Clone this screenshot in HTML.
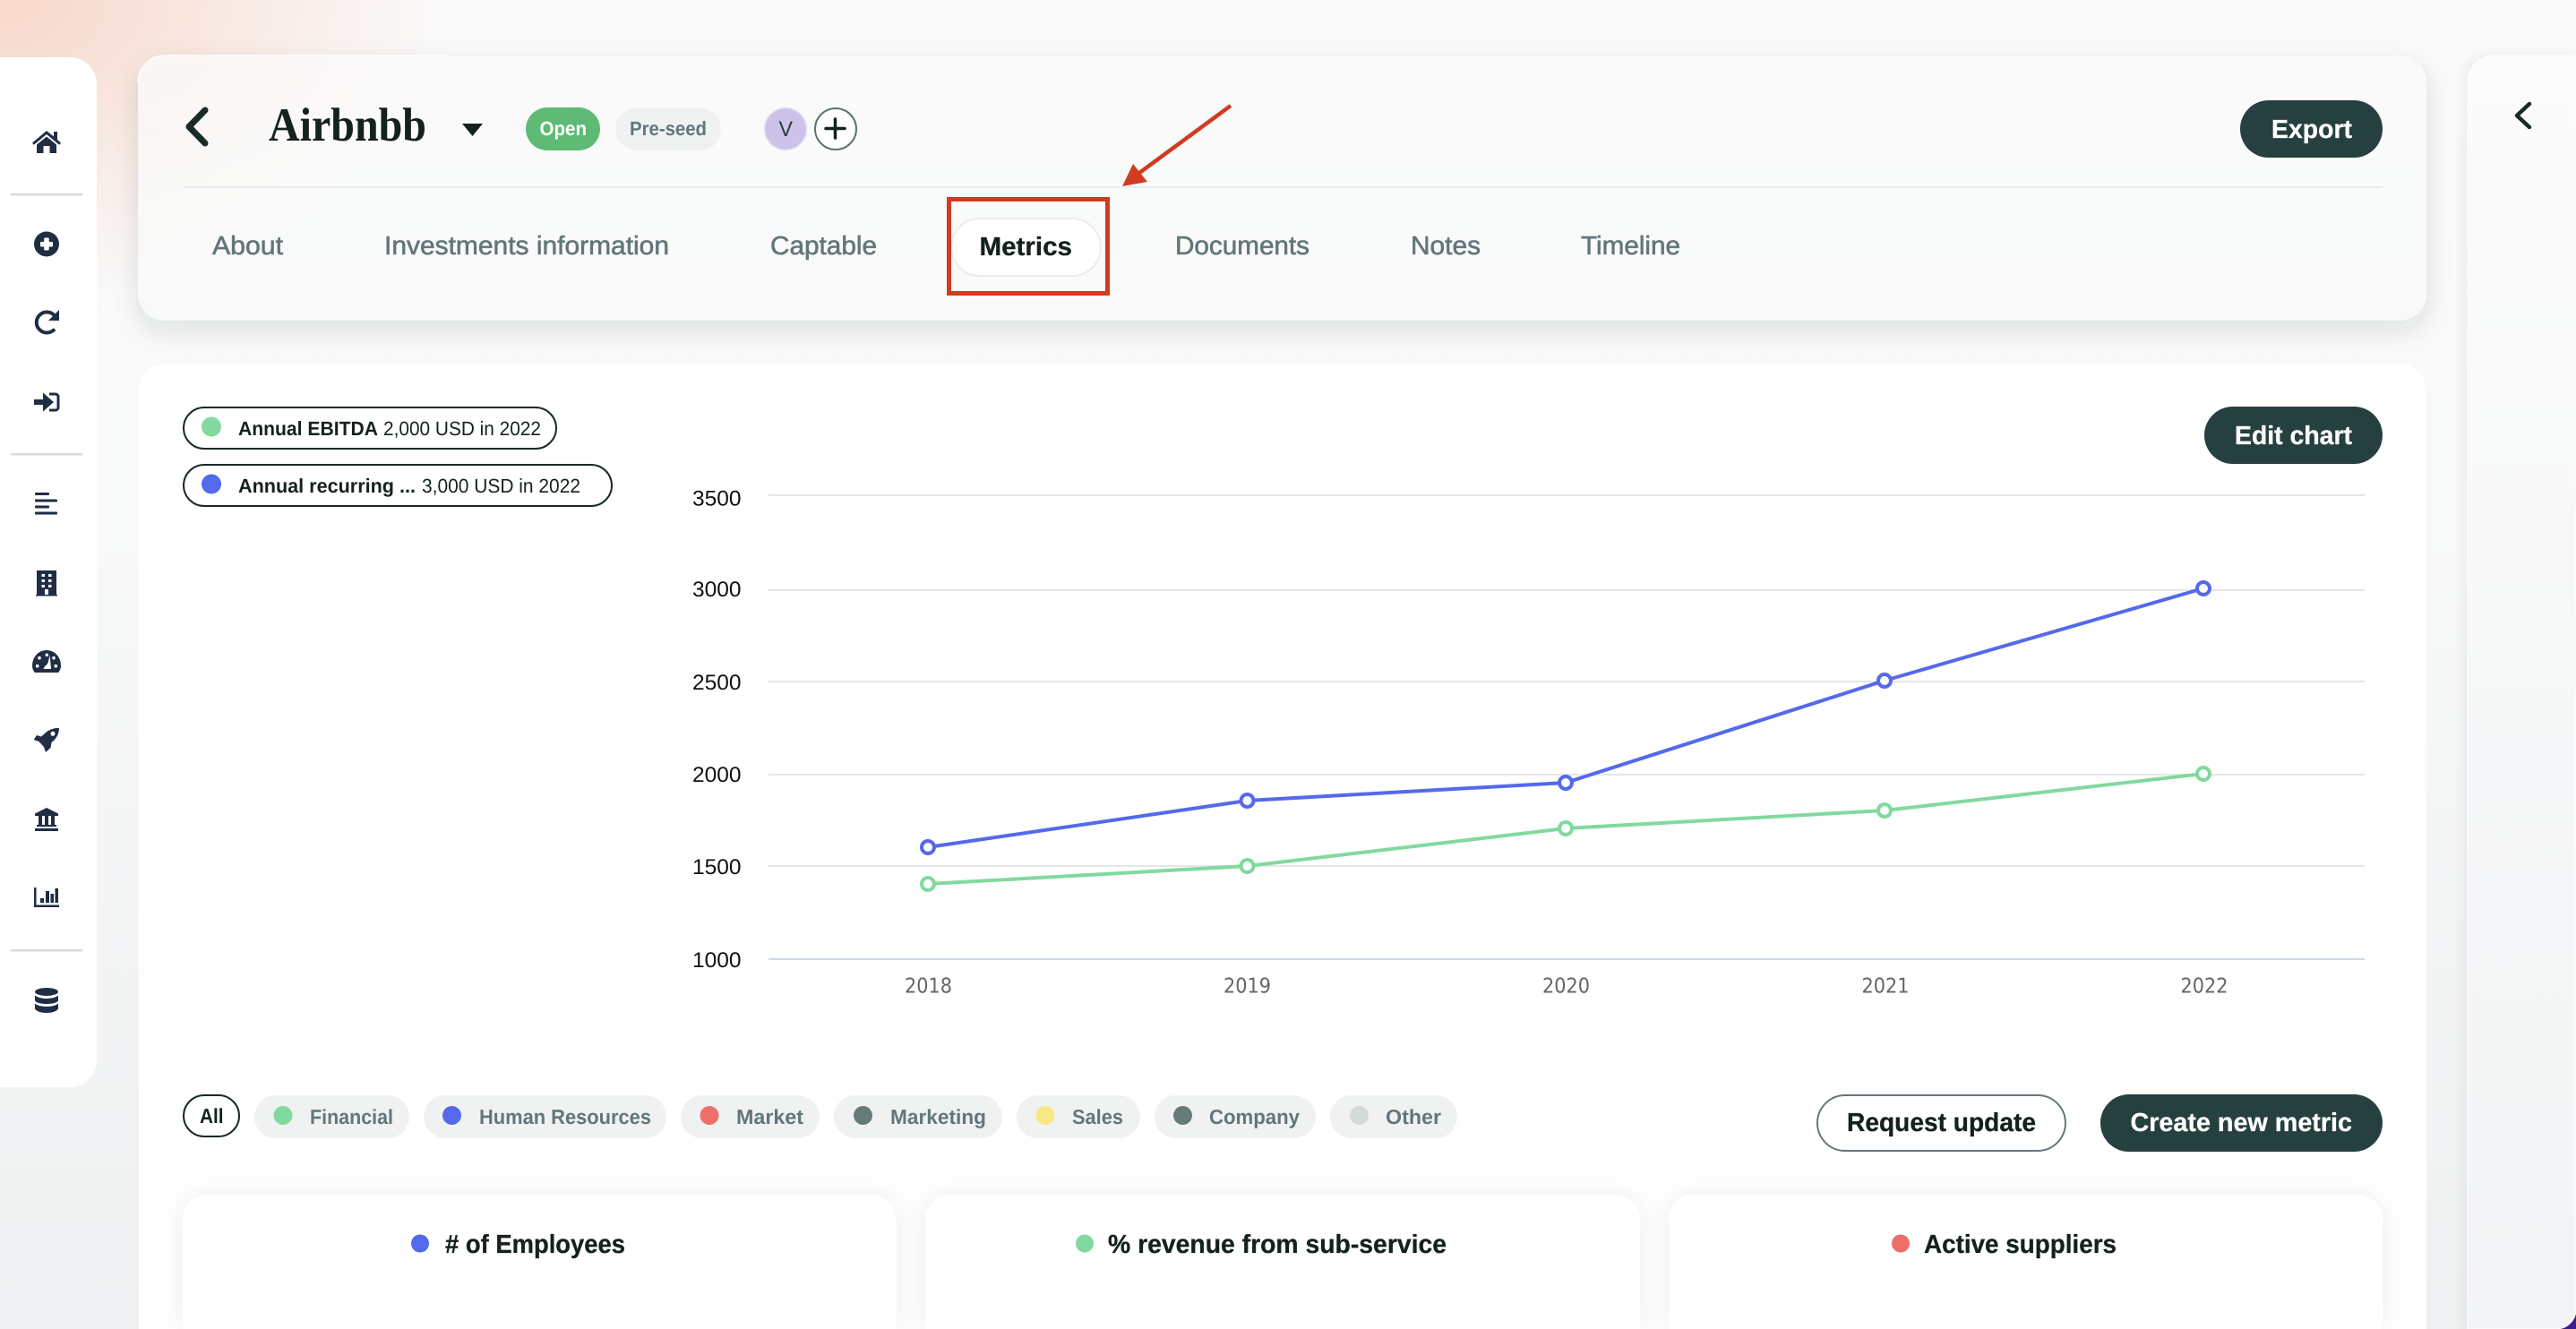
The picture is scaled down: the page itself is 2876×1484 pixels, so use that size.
<!DOCTYPE html>
<html><head><meta charset="utf-8"><title>Airbnbb metrics</title>
<style>
html,body{margin:0;padding:0;width:2876px;height:1484px;overflow:hidden;background:#fafafa}
svg{display:block}
text{font-family:"Liberation Sans",sans-serif;text-rendering:geometricPrecision}
.b{font-weight:700}
.tab{font-size:29px;fill:#63767a;stroke:#63767a;stroke-width:.6}
.f{font-size:23px;font-weight:700;fill:#63767a}
.t{font-size:29px;font-weight:700;fill:#14211f;stroke:#14211f;stroke-width:.3}
.y{font-size:24px;fill:#111}
.x{font-size:23px;fill:#666;font-family:"DejaVu Sans",sans-serif}
.w{fill:#fff;font-weight:700;font-size:29px;stroke:#fff;stroke-width:.3}
</style></head><body>
<svg width="2876" height="1484" viewBox="0 0 2876 1484" xmlns="http://www.w3.org/2000/svg">
<defs>
<linearGradient id="bg" x1="0" y1="0" x2="0" y2="1"><stop offset="0" stop-color="#fafafa"/><stop offset=".4" stop-color="#f8f9f9"/><stop offset="1" stop-color="#eef0f1"/></linearGradient>
<radialGradient id="peach" gradientUnits="userSpaceOnUse" cx="0" cy="0" r="1" gradientTransform="scale(500 340)"><stop offset="0" stop-color="#f8d8ca"/><stop offset=".35" stop-color="#f8e0d6" stop-opacity=".85"/><stop offset="1" stop-color="#f8e0d6" stop-opacity="0"/></radialGradient>
<linearGradient id="rp" x1="0" y1="0" x2="0" y2="1"><stop offset="0" stop-color="#fbfbfb"/><stop offset="1" stop-color="#f2f4f5"/></linearGradient>
<linearGradient id="hc" x1="0" y1="0" x2="0" y2="1"><stop offset="0" stop-color="#fafafa"/><stop offset=".55" stop-color="#f9fbfa"/><stop offset="1" stop-color="#f9f9f9"/></linearGradient>
<filter id="s1" x="-5%" y="-15%" width="110%" height="140%"><feDropShadow dx="0" dy="10" stdDeviation="14" flood-color="#1a2a28" flood-opacity=".12"/></filter>
<filter id="s2" x="-15%" y="-15%" width="130%" height="130%"><feDropShadow dx="0" dy="0" stdDeviation="16" flood-color="#1a2a38" flood-opacity=".07"/></filter>
<filter id="s3" x="-10%" y="-5%" width="120%" height="110%"><feDropShadow dx="-4" dy="0" stdDeviation="8" flood-color="#1a2a38" flood-opacity=".06"/></filter>
</defs>
<rect width="2876" height="1484" fill="url(#bg)"/>
<rect width="700" height="500" fill="url(#peach)"/>

<!-- corner purple -->
<rect x="2850" y="1460" width="26" height="24" fill="#3a1d8f"/>
<!-- right panel -->
<path d="M2755 1484V92a30 30 0 0 1 30-30H2876V1462a22 22 0 0 1-22 22Z" fill="url(#rp)" stroke="#fff" stroke-width="1" filter="url(#s3)"/>
<path d="M2824 116 2810 129 2824 142" fill="none" stroke="#1a2a28" stroke-width="4.500" stroke-linecap="round" stroke-linejoin="round"/>

<!-- sidebar -->
<path d="M0 64H78a30 30 0 0 1 30 30V1184a30 30 0 0 1-30 30H0Z" fill="#fff"/>
<rect x="12" y="216" width="80" height="2.500" fill="#d5dbd9"/>
<rect x="12" y="506" width="80" height="2.500" fill="#d5dbd9"/>
<rect x="12" y="1060" width="80" height="2.500" fill="#d5dbd9"/>
<g fill="#1f2d45">
<!-- home -->
<path d="M52 146 60 152.500V147h4v9l4 3.500-1.800 2.200L52 150 37.800 161.700 36 159.500Z"/>
<path d="M41 171v-9.500L52 152.500l11 9V171h-7.500v-8h-7v8Z"/>
<!-- plus circle -->
<circle cx="52" cy="272.500" r="14"/>
<rect x="45" y="270" width="14" height="5.500" rx="1" fill="#fff"/><rect x="49.200" y="265.500" width="5.500" height="14" rx="1" fill="#fff"/>
<!-- redo -->
<path d="M61 352.500A11.500 11.500 0 1 0 61 367.500" fill="none" stroke="#1f2d45" stroke-width="4"/>
<path d="M66 346V358H54Z"/>
<!-- sign in -->
<path d="M38 446h10v-7.500L60 449 48 459.500V452H38Z"/>
<path d="M55 440h7a3 3 0 0 1 3 3v12a3 3 0 0 1-3 3h-7" fill="none" stroke="#1f2d45" stroke-width="3"/>
<!-- bars -->
<rect x="39" y="550" width="16" height="3" rx="1"/><rect x="39" y="557.500" width="25" height="3" rx="1"/><rect x="39" y="564.500" width="16" height="3" rx="1"/><rect x="39" y="571.500" width="25" height="3" rx="1"/>
<!-- building -->
<path d="M41 637h22v27h1v1.500H40V664h1Z"/>
<g fill="#fff"><rect x="46.500" y="641" width="3.500" height="3"/><rect x="54" y="641" width="3.500" height="3"/><rect x="46.500" y="647" width="3.500" height="3"/><rect x="54" y="647" width="3.500" height="3"/><rect x="46.500" y="653" width="3.500" height="3"/><rect x="54" y="653" width="3.500" height="3"/><rect x="50" y="658" width="4" height="6"/></g>
<!-- gauge -->
<path d="M39 751Q36 748 36 743A16 17 0 0 1 68 743Q68 748 65 751Z"/>
<g fill="#fff"><circle cx="41.700" cy="743.700" r="1.800"/><circle cx="44" cy="734.700" r="1.800"/><circle cx="52.300" cy="731.300" r="1.800"/><circle cx="60" cy="734.700" r="1.800"/><circle cx="62.300" cy="743.700" r="1.800"/><path d="M55.700 732 57 747H48.300L50.500 743.500 53 741.500Z"/></g>
<!-- rocket -->
<path d="M66 812.700C59 813 54 815 50 819L46 822.500 41 821 37.700 826 43.500 828 49 834 51 840 56.500 835 57.500 829C62 826 66 820 66 812.700Z"/>
<circle cx="59" cy="819.300" r="2.500" fill="#fff"/>
<!-- bank -->
<path d="M52 902 65 908.500V911H39V908.500Z"/>
<rect x="43" y="911" width="4" height="10"/><rect x="50" y="911" width="4" height="10"/><rect x="57" y="911" width="4" height="10"/>
<rect x="41" y="921" width="22" height="2"/><rect x="39" y="925" width="26" height="3"/>
<!-- chart -->
<path d="M38 991h2.500v19.500H66V1013H38Z"/>
<rect x="45" y="1003" width="4" height="5"/><rect x="51" y="995" width="4" height="13"/><rect x="56.500" y="998" width="3.500" height="10"/><rect x="61.500" y="992" width="3.500" height="16"/>
<!-- database -->
<ellipse cx="52" cy="1107.500" rx="13" ry="4.500"/>
<path d="M39 1111.500c3 2.500 8 3.500 13 3.500s10-1 13-3.500v6c-2 2.500-7 3.500-13 3.500s-11-1-13-3.500Z"/>
<path d="M39 1120.500c3 2.500 8 3.500 13 3.500s10-1 13-3.500v6c-2 3-7 4.500-13 4.500s-11-1.500-13-4.500Z"/>
</g>

<!-- header card -->
<rect x="154" y="62" width="2555" height="296" rx="30" fill="url(#hc)" filter="url(#s1)"/>
<rect x="154" y="62" width="700" height="296" rx="30" fill="url(#peach)" opacity=".22"/>
<path d="M154 92a30 30 0 0 1 30-30H500" fill="none" stroke="#fff" stroke-width="1.500"/>
<rect x="204" y="208" width="2456" height="2" fill="#eceeee"/>
<path d="M229 123 211 141.500 229 160" fill="none" stroke="#1a2a28" stroke-width="7" stroke-linecap="round" stroke-linejoin="round"/>
<text x="300" y="157" font-size="53" font-weight="700" fill="#14211f" textLength="176" lengthAdjust="spacingAndGlyphs" style="font-family:'Liberation Serif',serif">Airbnbb</text>
<path d="M516 138H539L527.500 152Z" fill="#14211f"/>
<rect x="587" y="120" width="83" height="48" rx="24" fill="#5fba76"/>
<text x="602.500" y="151" font-size="22" class="b" fill="#fff" textLength="52.500" lengthAdjust="spacingAndGlyphs">Open</text>
<rect x="687" y="120" width="118" height="48" rx="24" fill="#f0f2f2"/>
<text x="703" y="151" font-size="22" class="b" fill="#63767a" textLength="86" lengthAdjust="spacingAndGlyphs">Pre-seed</text>
<circle cx="877" cy="144" r="23.500" fill="#cdc3ea" stroke="#e6e2f2" stroke-width="1.500"/>
<text x="869.500" y="152" font-size="24" fill="#2c3b3b" textLength="15.500" lengthAdjust="spacingAndGlyphs">V</text>
<circle cx="933" cy="144" r="23" fill="#fff" stroke="#5f7370" stroke-width="2"/>
<path d="M922 143.500H943M932.500 133V154" stroke="#14211f" stroke-width="3.500" stroke-linecap="round"/>

<rect x="2501" y="112" width="159" height="64" rx="32" fill="#263f3f"/>
<text class="w" x="2536" y="154" textLength="90" lengthAdjust="spacingAndGlyphs">Export</text>

<!-- tabs -->
<text class="tab" x="237" y="284" textLength="79" lengthAdjust="spacingAndGlyphs">About</text>
<text class="tab" x="429" y="284" textLength="318" lengthAdjust="spacingAndGlyphs">Investments information</text>
<text class="tab" x="860" y="284" textLength="119" lengthAdjust="spacingAndGlyphs">Captable</text>
<rect x="1062" y="244" width="167" height="64" rx="32" fill="#fff" stroke="#eceeee" stroke-width="2"/>
<text class="t" x="1093.500" y="285" textLength="103.500" lengthAdjust="spacingAndGlyphs">Metrics</text>
<text class="tab" x="1312" y="284" textLength="150" lengthAdjust="spacingAndGlyphs">Documents</text>
<text class="tab" x="1575" y="284" textLength="78" lengthAdjust="spacingAndGlyphs">Notes</text>
<text class="tab" x="1765" y="284" textLength="111" lengthAdjust="spacingAndGlyphs">Timeline</text>
<rect x="1059.500" y="222.500" width="177" height="105" fill="none" stroke="#d13b20" stroke-width="5"/>
<path d="M1374 118 1268 196" stroke="#d13b20" stroke-width="4.500" fill="none"/>
<path d="M1253 208 1265 183 1281 203Z" fill="#d13b20"/>

<!-- chart card -->
<path d="M155 1484V436a30 30 0 0 1 30-30H2679a30 30 0 0 1 30 30V1484Z" fill="#fff"/>
<rect x="205" y="455" width="416" height="46" rx="23" fill="#fff" stroke="#1a2a28" stroke-width="2"/>
<circle cx="236" cy="476.500" r="11" fill="#82d99e"/>
<text x="266" y="486" font-size="22" class="b" fill="#14211f" textLength="156" lengthAdjust="spacingAndGlyphs">Annual EBITDA</text>
<text x="428" y="486" font-size="22" fill="#14211f" textLength="176" lengthAdjust="spacingAndGlyphs">2,000 USD in 2022</text>
<rect x="205" y="519" width="478" height="46" rx="23" fill="#fff" stroke="#1a2a28" stroke-width="2"/>
<circle cx="236" cy="540.500" r="11" fill="#5469ec"/>
<text x="266" y="550" font-size="22" class="b" fill="#14211f" textLength="198" lengthAdjust="spacingAndGlyphs">Annual recurring ...</text>
<text x="471" y="550" font-size="22" fill="#14211f" textLength="177" lengthAdjust="spacingAndGlyphs">3,000 USD in 2022</text>
<rect x="2461" y="454" width="199" height="64" rx="32" fill="#263f3f"/>
<text class="w" x="2495" y="496" textLength="131" lengthAdjust="spacingAndGlyphs">Edit chart</text>

<!-- grid -->
<g fill="#e6e6e6"><rect x="858" y="552" width="1782" height="2"/><rect x="858" y="658" width="1782" height="2"/><rect x="858" y="760" width="1782" height="2"/><rect x="858" y="864" width="1782" height="2"/><rect x="858" y="966" width="1782" height="2"/></g>
<rect x="858" y="1070" width="1782" height="2" fill="#ccd6eb"/>
<text class="y" x="773" y="564.500" textLength="54.500" lengthAdjust="spacingAndGlyphs">3500</text>
<text class="y" x="773" y="666" textLength="54.500" lengthAdjust="spacingAndGlyphs">3000</text>
<text class="y" x="773" y="770" textLength="54.500" lengthAdjust="spacingAndGlyphs">2500</text>
<text class="y" x="773" y="873" textLength="54.500" lengthAdjust="spacingAndGlyphs">2000</text>
<text class="y" x="773" y="976" textLength="54.500" lengthAdjust="spacingAndGlyphs">1500</text>
<text class="y" x="773" y="1080" textLength="54.500" lengthAdjust="spacingAndGlyphs">1000</text>
<text class="x" x="1010" y="1108.500" textLength="53" lengthAdjust="spacingAndGlyphs">2018</text>
<text class="x" x="1366" y="1108.500" textLength="53" lengthAdjust="spacingAndGlyphs">2019</text>
<text class="x" x="1722" y="1108.500" textLength="53" lengthAdjust="spacingAndGlyphs">2020</text>
<text class="x" x="2078.500" y="1108.500" textLength="53" lengthAdjust="spacingAndGlyphs">2021</text>
<text class="x" x="2434.500" y="1108.500" textLength="53" lengthAdjust="spacingAndGlyphs">2022</text>
<!-- series -->
<polyline points="1036,987 1392.500,967 1748,925 2104,905 2460,864" fill="none" stroke="#82d99e" stroke-width="4"/>
<polyline points="1036,946 1392.500,894 1748,874 2104,760 2460,657" fill="none" stroke="#5469ec" stroke-width="4"/>
<g fill="#fff" stroke="#82d99e" stroke-width="4"><circle cx="1036" cy="987" r="7"/><circle cx="1392.500" cy="967" r="7"/><circle cx="1748" cy="925" r="7"/><circle cx="2104" cy="905" r="7"/><circle cx="2460" cy="864" r="7"/></g>
<g fill="#fff" stroke="#5469ec" stroke-width="4"><circle cx="1036" cy="946" r="7"/><circle cx="1392.500" cy="894" r="7"/><circle cx="1748" cy="874" r="7"/><circle cx="2104" cy="760" r="7"/><circle cx="2460" cy="657" r="7"/></g>

<!-- filters -->
<rect x="205" y="1223" width="62" height="46" rx="23" fill="#fff" stroke="#1a2a28" stroke-width="2"/>
<text x="223" y="1254" font-size="23" class="b" fill="#14211f" textLength="26.500" lengthAdjust="spacingAndGlyphs">All</text>
<g fill="#f0f2f2">
<rect x="284" y="1223" width="173" height="48" rx="24"/><rect x="473" y="1223" width="271" height="48" rx="24"/><rect x="760" y="1223" width="155" height="48" rx="24"/><rect x="931" y="1223" width="188" height="48" rx="24"/><rect x="1135" y="1223" width="138" height="48" rx="24"/><rect x="1289" y="1223" width="180" height="48" rx="24"/><rect x="1485" y="1223" width="142" height="48" rx="24"/>
</g>
<circle cx="316" cy="1245.500" r="10.500" fill="#82d99e"/><text class="f" x="346" y="1255" textLength="93" lengthAdjust="spacingAndGlyphs">Financial</text>
<circle cx="504.500" cy="1245.500" r="10.500" fill="#5469ec"/><text class="f" x="535" y="1255" textLength="192" lengthAdjust="spacingAndGlyphs">Human Resources</text>
<circle cx="792" cy="1245.500" r="10.500" fill="#ee6f6a"/><text class="f" x="822" y="1255" textLength="75" lengthAdjust="spacingAndGlyphs">Market</text>
<circle cx="963.500" cy="1245.500" r="10.500" fill="#667a78"/><text class="f" x="994" y="1255" textLength="107" lengthAdjust="spacingAndGlyphs">Marketing</text>
<circle cx="1167" cy="1245.500" r="10.500" fill="#f7e884"/><text class="f" x="1197" y="1255" textLength="57" lengthAdjust="spacingAndGlyphs">Sales</text>
<circle cx="1320.500" cy="1245.500" r="10.500" fill="#667a78"/><text class="f" x="1350" y="1255" textLength="101" lengthAdjust="spacingAndGlyphs">Company</text>
<circle cx="1517.500" cy="1245.500" r="10.500" fill="#d3dbda"/><text class="f" x="1547" y="1255" textLength="62" lengthAdjust="spacingAndGlyphs">Other</text>

<rect x="2029" y="1223" width="277" height="62" rx="31" fill="#fff" stroke="#64787a" stroke-width="2"/>
<text class="t" x="2062" y="1263" textLength="211" lengthAdjust="spacingAndGlyphs">Request update</text>
<rect x="2345" y="1222" width="315" height="64" rx="32" fill="#263f3f"/>
<text class="w" x="2378.500" y="1263" textLength="247.500" lengthAdjust="spacingAndGlyphs">Create new metric</text>

<!-- metric cards -->
<path d="M204 1484V1362a28 28 0 0 1 28-28H973a28 28 0 0 1 28 28V1484Z" fill="#fff" filter="url(#s2)"/>
<path d="M1033 1484V1362a28 28 0 0 1 28-28H1803a28 28 0 0 1 28 28V1484Z" fill="#fff" filter="url(#s2)"/>
<path d="M1863 1484V1362a28 28 0 0 1 28-28H2632a28 28 0 0 1 28 28V1484Z" fill="#fff" filter="url(#s2)"/>
<circle cx="469" cy="1388.500" r="10" fill="#5469ec"/><text class="t" x="497" y="1399" textLength="201" lengthAdjust="spacingAndGlyphs"># of Employees</text>
<circle cx="1211" cy="1388.500" r="10" fill="#82d99e"/><text class="t" x="1237" y="1399" textLength="378" lengthAdjust="spacingAndGlyphs">% revenue from sub-service</text>
<circle cx="2122" cy="1388.500" r="10" fill="#ee6f6a"/><text class="t" x="2148" y="1399" textLength="215" lengthAdjust="spacingAndGlyphs">Active suppliers</text>
</svg>
</body></html>
